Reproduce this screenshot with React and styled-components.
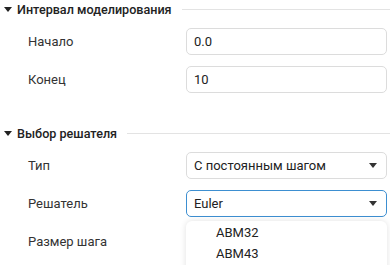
import React, { useState } from 'react';
import styled, { createGlobalStyle } from 'styled-components';

const GlobalStyle = createGlobalStyle`
  html, body {
    margin: 0;
    padding: 0;
    background: #fff;
  }
  body {
    font-family: Roboto, "Liberation Sans", sans-serif;
    font-size: 13px;
    color: #333;
  }
`;

const Page = styled.div`
  width: 390px;
  height: 265px;
  overflow: hidden;
  display: flex;
  flex-direction: column;
  gap: 31px;
`;

const Section = styled.section`
  display: flex;
  flex-direction: column;
`;

const Header = styled.div`
  height: 18px;
  display: flex;
  align-items: center;
  gap: 5px;
  padding-left: 4px;
  margin-bottom: 10px;
  font-size: 12.6px;
  font-weight: 500;
  color: #222;

  &::after {
    content: '';
    flex: 1;
    height: 1px;
    background: #e3e3e3;
    margin-left: 5px;
  }
`;

const Caret = styled.span`
  width: 0;
  height: 0;
  border-left: 4px solid transparent;
  border-right: 4px solid transparent;
  border-top: 5px solid ${({ $light }) => ($light ? '#333' : '#222')};
`;

const Rows = styled.div`
  display: flex;
  flex-direction: column;
  gap: 11px;
`;

const Row = styled.div`
  display: flex;
  align-items: center;
  padding: 0 3px 0 28px;
  height: 27px;
`;

const Label = styled.div`
  width: 158px;
  flex: none;
`;

const Control = styled.div`
  position: relative;
  flex: 1;
  height: 27px;
`;

const Field = styled.div`
  box-sizing: border-box;
  height: 100%;
  display: flex;
  align-items: center;
  justify-content: space-between;
  padding: 0 9px 0 7px;
  border: 1px solid ${({ $focused }) => ($focused ? '#3d8fd1' : '#dcdcdc')};
  border-radius: 5px;
  color: #222;
  background: #fff;
`;

const Menu = styled.div`
  position: absolute;
  top: 31px;
  left: 0;
  right: 0;
  height: 60px;
  background: #fff;
  border-radius: 6px 6px 0 0;
  box-shadow: 0 0 6px rgba(0, 0, 0, 0.12);
  padding-top: 1px;
  z-index: 2;
`;

const Option = styled.div`
  height: 21px;
  display: flex;
  align-items: center;
  padding-left: 30px;
  color: #222;
`;

const Input = ({ value }) => <Field>{value}</Field>;

const Select = ({ value, open, options = [] }) => (
  <>
    <Field $focused={open}>
      <span>{value}</span>
      <Caret $light />
    </Field>
    {open && (
      <Menu>
        {options.map((o) => (
          <Option key={o}>{o}</Option>
        ))}
      </Menu>
    )}
  </>
);

const App = () => {
  const [solvers] = useState(['ABM32', 'ABM43']);

  return (
    <Page>
      <GlobalStyle />
      <Section>
        <Header>
          <Caret />
          Интервал моделирования
        </Header>
        <Rows>
          <Row>
            <Label>Начало</Label>
            <Control><Input value="0.0" /></Control>
          </Row>
          <Row>
            <Label>Конец</Label>
            <Control><Input value="10" /></Control>
          </Row>
        </Rows>
      </Section>
      <Section>
        <Header>
          <Caret />
          Выбор решателя
        </Header>
        <Rows>
          <Row>
            <Label>Тип</Label>
            <Control><Select value="С постоянным шагом" /></Control>
          </Row>
          <Row>
            <Label>Решатель</Label>
            <Control><Select value="Euler" open options={solvers} /></Control>
          </Row>
          <Row>
            <Label>Размер шага</Label>
            <Control />
          </Row>
        </Rows>
      </Section>
    </Page>
  );
};

export default App;
